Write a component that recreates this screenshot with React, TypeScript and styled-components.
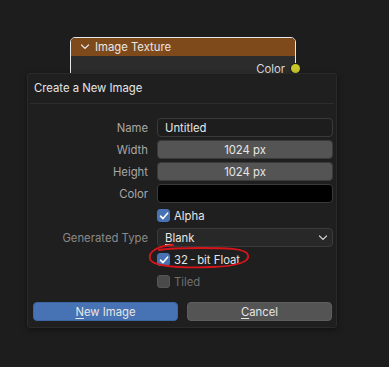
import React from 'react';
import styled, { createGlobalStyle } from 'styled-components';

const GlobalStyle = createGlobalStyle`
  html, body {
    margin: 0;
    padding: 0;
    background: #1d1d1d;
    width: 389px;
    height: 367px;
    overflow: hidden;
  }
  body {
    font-family: Inter, "DejaVu Sans", sans-serif;
    font-size: 11.3px;
  }
`;

const Canvas = styled.div`
  position: relative;
  width: 389px;
  height: 367px;
  background: #1d1d1d;
`;

const Node = styled.div`
  position: absolute;
  left: 70px;
  top: 37px;
  width: 224px;
  height: 60px;
  border: 1px solid #e8e8e8;
  border-radius: 5px;
  background: #2c2c2c;
`;

const NodeHeader = styled.div`
  display: flex;
  align-items: center;
  gap: 5px;
  height: 18px;
  padding: 0 8px 0 9px;
  background: #7e4a1c;
  border-radius: 4px 4px 0 0;
  color: #e6e6e6;
`;

const NodeOutput = styled.div`
  position: relative;
  display: flex;
  justify-content: flex-end;
  align-items: center;
  height: 26px;
  padding-right: 10px;
  color: #dcdcdc;
`;

const Socket = styled.span`
  position: absolute;
  right: -5px;
  top: 8px;
  width: 9px;
  height: 9px;
  border-radius: 50%;
  background: #c7c729;
  box-shadow: 0 0 0 1px #1a1a1a;
`;

const Dialog = styled.div`
  position: absolute;
  left: 27px;
  top: 73px;
  width: 310px;
  height: 255px;
  box-sizing: border-box;
  background: #1f1f1f;
  border: 1px solid #2a2a2a;
  border-radius: 3px;
  box-shadow: 0 2px 6px rgba(0, 0, 0, 0.4);
`;

const Title = styled.div`
  height: 30px;
  display: flex;
  align-items: center;
  padding-left: 4px;
  padding-bottom: 2px;
  box-sizing: border-box;
  color: #e6e6e6;
  border-bottom: 1px solid #2d2d2d;
  margin: 0 2px;
`;

const Form = styled.div`
  display: grid;
  grid-template-columns: 115px 176px;
  column-gap: 9px;
  row-gap: 3px;
  padding: 14px 0 0 5px;
`;

const Label = styled.div<{ $dim?: boolean }>`
  height: 19px;
  display: flex;
  align-items: center;
  justify-content: flex-end;
  color: ${(p) => (p.$dim ? '#8a8a8a' : '#a8a8a8')};
`;

const Field = styled.div<{ $bg: string; $center?: boolean; $color?: string }>`
  height: 19px;
  box-sizing: border-box;
  display: flex;
  align-items: center;
  justify-content: ${(p) => (p.$center ? 'center' : 'flex-start')};
  padding: 0 7px;
  background: ${(p) => p.$bg};
  border: 1px solid #3a3a3a;
  border-radius: 4px;
  color: ${(p) => p.$color || '#e6e6e6'};
`;

const Select = styled(Field)`
  justify-content: space-between;
  padding-right: 4px;
`;

const CheckRow = styled.div<{ $dim?: boolean }>`
  height: 19px;
  display: flex;
  align-items: center;
  gap: 4px;
  color: ${(p) => (p.$dim ? '#6f6f6f' : '#e6e6e6')};
  position: relative;
`;

const Box = styled.span<{ $on?: boolean }>`
  width: 13px;
  height: 13px;
  box-sizing: border-box;
  border-radius: 3px;
  background: ${(p) => (p.$on ? '#4772b3' : '#4a4a4a')};
  border: 1px solid ${(p) => (p.$on ? '#4772b3' : '#555')};
  display: flex;
  align-items: center;
  justify-content: center;
`;

const Spacer = styled.div`
  height: 19px;
`;

const Buttons = styled.div`
  display: grid;
  grid-template-columns: 145px 145px;
  column-gap: 9px;
  padding: 11px 0 0 5px;
`;

const Button = styled.div<{ $primary?: boolean }>`
  height: 19px;
  box-sizing: border-box;
  display: flex;
  align-items: center;
  justify-content: center;
  border-radius: 4px;
  background: ${(p) => (p.$primary ? '#4772b3' : '#545454')};
  border: 1px solid ${(p) => (p.$primary ? '#3e66a3' : '#5e5e5e')};
  color: #e6e6e6;
`;

const U = styled.span`
  text-decoration: underline;
  text-underline-offset: 2px;
`;

const Circle = styled.svg`
  position: absolute;
  left: -10px;
  top: -9px;
  pointer-events: none;
`;

const Check = () => (
  <svg width="10" height="10" viewBox="0 0 10 10">
    <path d="M1.5 5.2 L4 7.6 L8.6 2.2" stroke="#fff" strokeWidth="1.6" fill="none" strokeLinecap="round" strokeLinejoin="round" />
  </svg>
);

const Chevron = ({ color = '#cfcfcf' }: { color?: string }) => (
  <svg width="10" height="8" viewBox="0 0 10 8">
    <path d="M1.5 2 L5 5.5 L8.5 2" stroke={color} strokeWidth="1.2" fill="none" strokeLinecap="round" />
  </svg>
);

export default function App() {
  return (
    <Canvas>
      <GlobalStyle />
      <Node>
        <NodeHeader>
          <Chevron color="#e6e6e6" />
          <span>Image Texture</span>
        </NodeHeader>
        <NodeOutput>
          Color
          <Socket />
        </NodeOutput>
      </Node>
      <Dialog>
        <Title>Create a New Image</Title>
        <Form>
          <Label>Name</Label>
          <Field $bg="#1d1d1d">Untitled</Field>
          <Label>Width</Label>
          <Field $bg="#545454" $center>1024 px</Field>
          <Label>Height</Label>
          <Field $bg="#545454" $center>1024 px</Field>
          <Label>Color</Label>
          <Field $bg="#000000" />
          <Spacer />
          <CheckRow>
            <Box $on><Check /></Box>
            Alpha
          </CheckRow>
          <Label $dim>Generated Type</Label>
          <Select $bg="#282828">
            <span><U>B</U>lank</span>
            <Chevron />
          </Select>
          <Spacer />
          <CheckRow>
            <Box $on><Check /></Box>
            32{'\u2009'}-{'\u2009'}bit Float
            <Circle width="106" height="32" viewBox="0 0 106 32">
              <path
                d="M26 4 C 10 5, 1 11, 3 18 C 5 26, 38 27, 66 26 C 90 25, 103 21, 101 14 C 99 7, 78 7, 54 7 C 40 7, 24 7, 12 9"
                stroke="#d8141b"
                strokeWidth="1.8"
                fill="none"
                strokeLinecap="round"
              />
            </Circle>
          </CheckRow>
          <Spacer />
          <CheckRow $dim>
            <Box />
            Tiled
          </CheckRow>
        </Form>
        <Buttons>
          <Button $primary><span><U>N</U>ew Image</span></Button>
          <Button><span><U>C</U>ancel</span></Button>
        </Buttons>
      </Dialog>
    </Canvas>
  );
}
